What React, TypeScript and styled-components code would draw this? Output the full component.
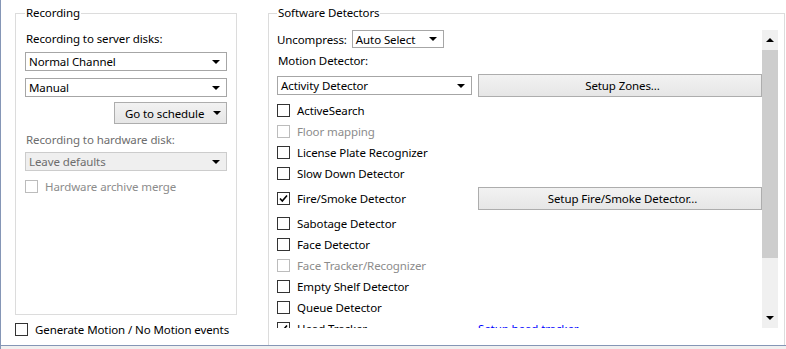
import React from "react";
import styled, { createGlobalStyle } from "styled-components";

const Global = createGlobalStyle`
  html, body { margin: 0; padding: 0; background: #ffffff; }
  body { font-family: "Noto Sans", "Open Sans", sans-serif; font-size: 11.5px; letter-spacing: -0.1px; color: #000; }
  * { box-sizing: border-box; }
`;

const Frame = styled.div`
  width: 786px;
  height: 349px;
  overflow: hidden;
  display: flex;
  flex-direction: column;
  border-left: 1px solid #8596b6;
  background: #fff;
`;

const Main = styled.div`
  height: 346px;
  overflow: hidden;
  display: flex;
  align-items: flex-start;
  padding-left: 14px;
  border-bottom: 1px solid #8596b6;
  flex: none;
`;

const BottomStrip = styled.div`
  flex: 1;
  background: #f0f0f0;
`;

const LeftColumn = styled.div`
  width: 222px;
  margin-top: 5px;
  display: flex;
  flex-direction: column;
  flex: none;
`;

const Group = styled.fieldset<{ $w: number; $h: number; $pl: number; $pr: number }>`
  margin: 0;
  width: ${(p) => p.$w}px;
  height: ${(p) => p.$h}px;
  border: 1px solid #dcdcdc;
  padding: 0 ${(p) => p.$pr}px 0 ${(p) => p.$pl}px;
  display: flex;
  flex-direction: column;
  min-width: 0;
  flex: none;
`;

const Legend = styled.legend`
  padding: 0 1px;
  line-height: 16px;
  height: 16px;
`;

const Label = styled.div<{ $mt: number; $disabled?: boolean }>`
  margin-top: ${(p) => p.$mt}px;
  height: 16px;
  line-height: 16px;
  padding-left: 1px;
  white-space: nowrap;
  flex: none;
  color: ${(p) => (p.$disabled ? "#6d6d6d" : "#000")};
`;

const ComboBox = styled.div<{ $mt?: number; $w?: number; $disabled?: boolean; $h?: number }>`
  margin-top: ${(p) => p.$mt ?? 0}px;
  width: ${(p) => (p.$w ? `${p.$w}px` : "100%")};
  height: ${(p) => p.$h ?? 19}px;
  border: 1px solid ${(p) => (p.$disabled ? "#cccccc" : "#a6a6a6")};
  background: ${(p) => (p.$disabled ? "#efefef" : "#fff")};
  color: ${(p) => (p.$disabled ? "#6d6d6d" : "#000")};
  display: flex;
  align-items: center;
  justify-content: space-between;
  padding: 0 6px 0 3px;
  white-space: nowrap;
  flex: none;
`;

const Arrow = styled.span<{ $up?: boolean }>`
  width: 0;
  height: 0;
  border-left: 4px solid transparent;
  border-right: 4px solid transparent;
  ${(p) => (p.$up ? "border-bottom: 4px solid #000;" : "border-top: 4px solid #000;")}
  flex: none;
`;

const ButtonRow = styled.div`
  margin-top: 5px;
  display: flex;
  justify-content: flex-end;
  flex: none;
`;

const PushButton = styled.div<{ $w?: number; $h?: number; $center?: boolean }>`
  width: ${(p) => (p.$w ? `${p.$w}px` : "100%")};
  height: ${(p) => p.$h ?? 23}px;
  border: 1px solid #adadad;
  background: linear-gradient(#f2f2f2, #e6e6e6);
  display: flex;
  align-items: center;
  justify-content: ${(p) => (p.$center ? "center" : "space-between")};
  padding: 0 5px 0 10px;
  white-space: nowrap;
  flex: none;
`;

const CheckRow = styled.label<{ $h?: number; $mt?: number; $disabled?: boolean }>`
  height: ${(p) => p.$h ?? 21}px;
  margin-top: ${(p) => p.$mt ?? 0}px;
  display: flex;
  align-items: center;
  gap: 7px;
  white-space: nowrap;
  flex: none;
  color: ${(p) => (p.$disabled ? "#8c8c8c" : "#000")};
`;

const Box = styled.span<{ $disabled?: boolean }>`
  width: 13px;
  height: 13px;
  border: 1px solid ${(p) => (p.$disabled ? "#bcbcbc" : "#333333")};
  background: #fff;
  flex: none;
  display: flex;
  align-items: center;
  justify-content: center;
`;

const Check = () => (
  <svg width="11" height="11" viewBox="0 0 11 11">
    <polyline points="2,5.5 4.3,8 9,2.5" fill="none" stroke="#000" strokeWidth="1.6" />
  </svg>
);

const CheckBox: React.FC<{ label: string; checked?: boolean; disabled?: boolean; h?: number; mt?: number }> = ({
  label,
  checked,
  disabled,
  h,
  mt,
}) => (
  <CheckRow $h={h} $mt={mt} $disabled={disabled}>
    <Box $disabled={disabled}>{checked && <Check />}</Box>
    <span>{label}</span>
  </CheckRow>
);

const RightGroupWrap = styled.div`
  margin-left: 31px;
  margin-top: 5px;
  flex: none;
`;

const ScrollArea = styled.div`
  margin-top: 9px;
  display: flex;
  height: 298px;
  flex: none;
`;

const ScrollContent = styled.div`
  width: 485px;
  height: 298px;
  overflow: hidden;
  display: flex;
  flex-direction: column;
`;

const InlineRow = styled.div`
  display: flex;
  align-items: center;
  gap: 5px;
  height: 18px;
  flex: none;
`;

const GridRow = styled.div<{ $h: number; $mt?: number }>`
  display: grid;
  grid-template-columns: 195px 1fr;
  column-gap: 6px;
  align-items: center;
  height: ${(p) => p.$h}px;
  margin-top: ${(p) => p.$mt ?? 0}px;
  flex: none;
`;

const Spacer = styled.div<{ $h: number }>`
  height: ${(p) => p.$h}px;
  flex: none;
`;

const Link = styled.span`
  color: #0000ff;
  white-space: nowrap;
`;

const ScrollBar = styled.div`
  width: 16px;
  height: 298px;
  background: #f0f0f0;
  display: flex;
  flex-direction: column;
  flex: none;
`;

const ScrollButton = styled.div`
  height: 20px;
  display: flex;
  align-items: center;
  justify-content: center;
  flex: none;
`;

const Thumb = styled.div`
  height: 208px;
  background: #cdcdcd;
  flex: none;
`;

const Track = styled.div`
  flex: 1;
`;

const detectors: { label: string; disabled?: boolean }[] = [
  { label: "ActiveSearch" },
  { label: "Floor mapping", disabled: true },
  { label: "License Plate Recognizer" },
  { label: "Slow Down Detector" },
];

const detectors2: { label: string; disabled?: boolean }[] = [
  { label: "Sabotage Detector" },
  { label: "Face Detector" },
  { label: "Face Tracker/Recognizer", disabled: true },
  { label: "Empty Shelf Detector" },
  { label: "Queue Detector" },
];

export default function App() {
  return (
    <>
      <Global />
      <Frame>
        <Main>
          <LeftColumn>
            <Group $w={222} $h={310} $pl={9} $pr={9}>
              <Legend>Recording</Legend>
              <Label $mt={10}>Recording to server disks:</Label>
              <ComboBox $mt={5}>
                <span>Normal Channel</span>
                <Arrow />
              </ComboBox>
              <ComboBox $mt={7}>
                <span>Manual</span>
                <Arrow />
              </ComboBox>
              <ButtonRow>
                <PushButton $w={113} $h={22}>
                  <span>Go to schedule</span>
                  <Arrow />
                </PushButton>
              </ButtonRow>
              <Label $mt={8} $disabled>
                Recording to hardware disk:
              </Label>
              <ComboBox $mt={4} $disabled>
                <span>Leave defaults</span>
                <Arrow />
              </ComboBox>
              <CheckBox label="Hardware archive merge" disabled mt={5} />
            </Group>
            <CheckBox label="Generate Motion / No Motion events" mt={4} />
          </LeftColumn>
          <RightGroupWrap>
            <Group $w={517} $h={380} $pl={8} $pr={6}>
              <Legend>Software Detectors</Legend>
              <ScrollArea>
                <ScrollContent>
                  <InlineRow>
                    <span>Uncompress:</span>
                    <ComboBox $w={92} $h={18}>
                      <span>Auto Select</span>
                      <Arrow />
                    </ComboBox>
                  </InlineRow>
                  <Label $mt={5}>Motion Detector:</Label>
                  <GridRow $h={25} $mt={4}>
                    <ComboBox>
                      <span>Activity Detector</span>
                      <Arrow />
                    </ComboBox>
                    <PushButton $center>Setup Zones...</PushButton>
                  </GridRow>
                  <Spacer $h={2} />
                  {detectors.map((d) => (
                    <CheckBox key={d.label} label={d.label} disabled={d.disabled} />
                  ))}
                  <GridRow $h={29}>
                    <CheckBox label="Fire/Smoke Detector" checked />
                    <PushButton $center>Setup Fire/Smoke Detector...</PushButton>
                  </GridRow>
                  {detectors2.map((d) => (
                    <CheckBox key={d.label} label={d.label} disabled={d.disabled} />
                  ))}
                  <GridRow $h={21}>
                    <CheckBox label="Head Tracker" checked />
                    <Link>Setup head tracker</Link>
                  </GridRow>
                </ScrollContent>
                <ScrollBar>
                  <ScrollButton>
                    <Arrow $up />
                  </ScrollButton>
                  <Thumb />
                  <Track />
                  <ScrollButton>
                    <Arrow />
                  </ScrollButton>
                </ScrollBar>
              </ScrollArea>
            </Group>
          </RightGroupWrap>
        </Main>
        <BottomStrip />
      </Frame>
    </>
  );
}
